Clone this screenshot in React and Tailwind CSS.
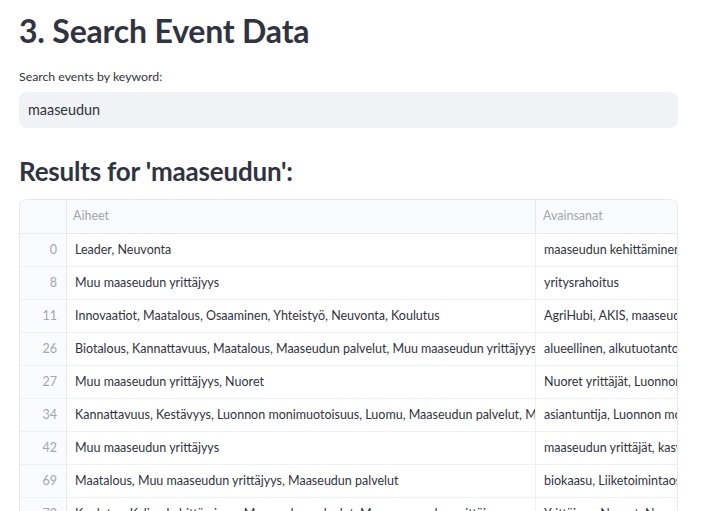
const rows = [
  [0, "Leader, Neuvonta", "maaseudun kehittäminen, hanke"],
  [8, "Muu maaseudun yrittäjyys", "yritysrahoitus"],
  [11, "Innovaatiot, Maatalous, Osaaminen, Yhteistyö, Neuvonta, Koulutus", "AgriHubi, AKIS, maaseudun kehittäminen"],
  [26, "Biotalous, Kannattavuus, Maatalous, Maaseudun palvelut, Muu maaseudun yrittäjyys", "alueellinen, alkutuotanto"],
  [27, "Muu maaseudun yrittäjyys, Nuoret", "Nuoret yrittäjät, Luonnonvarat"],
  [34, "Kannattavuus, Kestävyys, Luonnon monimuotoisuus, Luomu, Maaseudun palvelut, Muu maaseudun yrittäjyys", "asiantuntija, Luonnon monimuotoisuus"],
  [42, "Muu maaseudun yrittäjyys", "maaseudun yrittäjät, kasvu"],
  [69, "Maatalous, Muu maaseudun yrittäjyys, Maaseudun palvelut", "biokaasu, Liiketoimintaosaaminen"],
  [73, "Koulutus, Kylien kehittäminen, Maaseudun palvelut, Muu maaseudun yrittäjyys", "Yrittäjyys, Nuoret, Nuoret yrittäjät"],
];

export default function App() {
  return (
    <div className="h-[511px] bg-white text-[#31333f] px-[19px] pt-[11px] overflow-hidden" style={{ fontFamily: "Lato, 'Liberation Sans', sans-serif" }}>
      <h2 className="text-[32px] font-bold leading-[40px] tracking-[-0.2px]">3. Search Event Data</h2>
      <label className="block mt-[17px] text-[12.3px] leading-[18px]">Search events by keyword:</label>
      <div className="mt-[6px] h-[36px] w-[659px] rounded-lg bg-[#f0f2f6] flex items-center px-[9px] text-[14.4px]">maaseudun</div>
      <h3 className="mt-[25px] text-[26px] font-bold leading-[36px] tracking-[-0.2px]">Results for 'maaseudun':</h3>
      <div className="mt-[10px] w-[659px] border border-[#e6e8ec] rounded-t-lg overflow-hidden text-[12.5px]">
        <div className="flex h-[34px] bg-[#fafbfc] border-b border-[#e6e8ec] text-[#a2a6ae]">
          <div className="w-[47px] shrink-0 border-r border-[#e6e8ec]"></div>
          <div className="w-[469px] shrink-0 border-r border-[#e6e8ec] px-[6px] flex items-center">Aiheet</div>
          <div className="flex-1 px-[7px] flex items-center">Avainsanat</div>
        </div>
        {rows.map(([i, a, b]) => (
          <div key={i} className="flex h-[33px] border-b border-[#eef0f3]">
            <div className="w-[47px] shrink-0 bg-[#fafbfc] border-r border-[#e6e8ec] pr-[9px] flex items-center justify-end text-[#a2a6ae]">{i}</div>
            <div className="w-[469px] shrink-0 border-r border-[#eef0f3] pl-[8px] flex items-center overflow-hidden whitespace-nowrap">{a}</div>
            <div className="flex-1 pl-[8px] flex items-center overflow-hidden whitespace-nowrap">{b}</div>
          </div>
        ))}
      </div>
    </div>
  );
}
